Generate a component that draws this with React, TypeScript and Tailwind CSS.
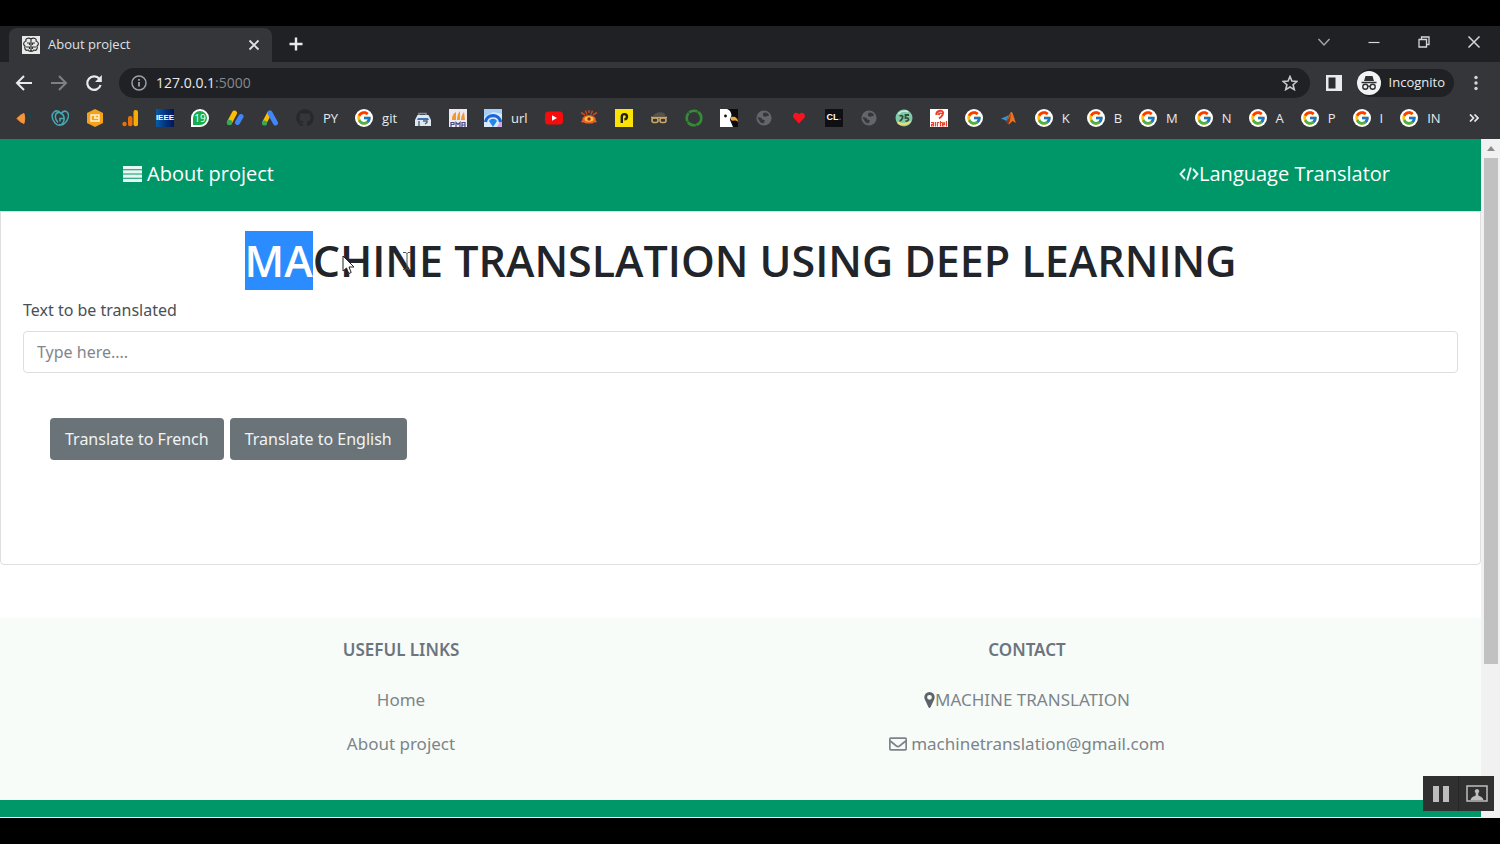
import type { ReactNode } from "react";
import { FaGithub, FaHeart, FaRegEnvelope } from "react-icons/fa";
import { FcGoogle } from "react-icons/fc";

type Bookmark = { name: string; icon: ReactNode; label?: string };

function Google() {
  return (
    <span className="flex h-[18px] w-[18px] items-center justify-center rounded-full bg-white">
      <FcGoogle size={16} />
    </span>
  );
}

function Svg({ children }: { children: ReactNode }) {
  return (
    <svg viewBox="0 0 18 18" className="h-[18px] w-[18px]" fill="none">
      {children}
    </svg>
  );
}

function Globe() {
  return (
    <Svg>
      <circle cx="9" cy="9" r="7.6" fill="#626569" />
      <path d="M8 4.500c2-2 5-.5 6 1.500-1 2-3 .5-3.500 2L8 7zM2.500 8.500c2.500-.5 4 .5 5 2l2.500 1-1.500 3-3-1z" fill="#36373a" />
    </Svg>
  );
}

const bookmarks: Bookmark[] = [
  {
    name: "Arrows",
    icon: (
      <Svg>
        <path d="M1 9.500 4 6.500 8 4.500q1.500 4.500 0 10l-4-2z" fill="#f7953c" stroke="#f7953c" strokeLinejoin="round" />
        <path d="M12.500 3v7.500l5-4z" fill="#12474d" />
      </Svg>
    ),
  },
  {
    name: "GoDaddy",
    icon: (
      <Svg>
        <path
          d="M7 13.500C3 9.500 3.500 3 8.500 3.600c4 .8 6.500 6 3 10.900-2 2.500-5 2.300-7.500-.5-3-3.500-4-8.500-1-11C5.500 1 8 2 10 4.500c1.500-2 4-3 6-1.500 3 2.500 1 8-2 11-2 2-4 2.500-6 1.500M12.500 9.500H9v3"
          stroke="#43a9b5"
          strokeWidth="1.500"
        />
      </Svg>
    ),
  },
  {
    name: "Hexagon",
    icon: (
      <Svg>
        <path d="m9 0 8 4v10l-8 4-8-4V4z" fill="#f5a21b" />
        <path d="M5 6h8v6H5zM8 9h5M9 6v3" stroke="#fff3d6" strokeWidth="1.400" />
      </Svg>
    ),
  },
  {
    name: "Analytics",
    icon: (
      <Svg>
        <circle cx="3.500" cy="15" r="2.200" fill="#e8710a" />
        <rect x="7" y="7" width="4.500" height="10.200" rx="2" fill="#e8710a" />
        <rect x="12.500" y="1" width="4.500" height="16.200" rx="2" fill="#f9ab00" />
      </Svg>
    ),
  },
  {
    name: "IEEE Xplore",
    icon: (
      <span className="flex h-[18px] w-[18px] items-center justify-center bg-linear-to-r from-[#0b5aa8] to-[#03145c] font-['Liberation_Sans'] text-[8px] font-bold text-white">
        IEEE
      </span>
    ),
  },
  {
    name: "WhatsApp",
    icon: (
      <span className="flex h-[18px] w-[18px] items-center justify-center rounded-full rounded-bl-sm border-2 border-white bg-[#16ad4b] text-[10px] text-white">
        19
      </span>
    ),
  },
  {
    name: "AdSense",
    icon: (
      <Svg>
        <path d="M3.500 13.500 8.500 4" stroke="#fbbc04" strokeWidth="5" strokeLinecap="round" />
        <circle cx="3.500" cy="13.500" r="2.700" fill="#34a853" />
        <path d="m11.500 13.500 3.500-6" stroke="#4285f4" strokeWidth="5" strokeLinecap="round" />
      </Svg>
    ),
  },
  {
    name: "Ads",
    icon: (
      <Svg>
        <path d="M3.500 13.500 8.500 4" stroke="#fbbc04" strokeWidth="4.500" strokeLinecap="round" />
        <path d="m9 4 5.500 10" stroke="#4285f4" strokeWidth="5" strokeLinecap="round" />
        <circle cx="3.500" cy="14" r="2.600" fill="#34a853" />
      </Svg>
    ),
  },
  { name: "GitHub", icon: <FaGithub size={18} color="#27282b" />, label: "PY" },
  { name: "Google git", icon: <Google />, label: "git" },
  {
    name: "Store",
    icon: (
      <Svg>
        <path d="M5 7V4.500h7V7" stroke="#7f8b9c" strokeWidth="1.600" />
        <path d="M3.500 6h11L17 11v6H1v-6z" fill="#dfe7f2" />
        <path d="M4 9h10l1 2H3z" fill="#3e6fae" />
        <path d="M9 12h4v1.500l-2 1.500M5 12v5" stroke="#536173" strokeWidth="1.400" />
      </Svg>
    ),
  },
  {
    name: "phpMyAdmin",
    icon: (
      <Svg>
        <rect width="18" height="18" fill="#eeeaf0" />
        <path d="M3 11c0-5 2-7 4-8v8zM8 11c0-4 1-7 3-9v9zM12 11c0-3 1-6 3-8l1 8z" fill="#f49a2d" />
        <path d="M2 18v-4.500h3v2H2M7 18v-4.500l2 2 2-2V18M13 18v-4.500h3V18M13 16h3" stroke="#4d4c87" strokeWidth="1.200" />
      </Svg>
    ),
  },
  {
    name: "Shortener",
    icon: (
      <Svg>
        <rect width="18" height="18" fill="#dce9fb" />
        <path d="M0 8V0h18v5L9 3z" fill="#a6cff7" />
        <path d="M18 9v9h-5z" fill="#c9a7e8" />
        <path d="M1.500 13c1-8.500 14-8.500 15 0" stroke="#1667d9" strokeWidth="3.200" />
        <path d="M5 12c2-3 6-3 8 0l-4 6z" fill="#2387ee" />
      </Svg>
    ),
    label: "url",
  },
  {
    name: "YouTube",
    icon: (
      <Svg>
        <rect y="2.500" width="18" height="13" rx="3.500" fill="#f80b0b" />
        <path d="m7 6.200 5 2.800-5 2.800z" fill="#fff" />
      </Svg>
    ),
  },
  {
    name: "Eye",
    icon: (
      <Svg>
        <path d="M1 3.500 5 6M5.500 1.500l1.500 4M9 1v3M12.500 1.500l-1.500 4M17 3.500 13 6" stroke="#c34a22" strokeWidth="1.500" />
        <path d="M.5 13q2-.5 2-4c3-4 10-4 13 0q0 3.500 2 4-4 0-5 1.500H6Q4 13 .5 13" fill="#e8602a" />
        <ellipse cx="9" cy="10" rx="4.500" ry="2.800" fill="#ffc038" />
        <circle cx="9" cy="10" r="1.700" fill="#8c2410" />
      </Svg>
    ),
  },
  {
    name: "Yellow P",
    icon: (
      <Svg>
        <rect width="18" height="18" fill="#fbe305" />
        <path d="M6.800 14V7.500a2.600 2.600 0 1 1 2.600 2.800" stroke="#24230f" strokeWidth="2.400" />
      </Svg>
    ),
  },
  {
    name: "Glasses",
    icon: (
      <Svg>
        <path d="M3 7c2-4 9-5 12-2v2z" fill="#59524a" />
        <path d="M1 8.500h16" stroke="#c9a86a" strokeWidth="1.600" />
        <rect x="2" y="9" width="6" height="4.500" rx="2" stroke="#c9a86a" strokeWidth="1.600" />
        <rect x="10" y="9" width="6" height="4.500" rx="2" stroke="#c9a86a" strokeWidth="1.600" />
      </Svg>
    ),
  },
  {
    name: "Anaconda",
    icon: (
      <Svg>
        <circle cx="9" cy="9" r="7.300" stroke="#348d36" strokeWidth="2.600" strokeDasharray="9 .6" />
      </Svg>
    ),
  },
  {
    name: "Eagle",
    icon: (
      <Svg>
        <rect width="18" height="18" fill="#0c0c0c" />
        <path d="M0 0h7c3 1 4 3 4.500 6L10 11l3 7H0z" fill="#fff" />
        <path d="M11 8c4-1 7 1 7 5-3-3-5 0-7-2z" fill="#efa63c" />
        <circle cx="5.500" cy="7" r="1.400" fill="#111" />
      </Svg>
    ),
  },
  { name: "Site one", icon: <Globe /> },
  {
    name: "Favourites",
    icon: (
      <span className="flex h-[18px] w-[18px] items-center justify-center">
        <FaHeart size={12} color="#f5141f" />
      </span>
    ),
  },
  {
    name: "CL",
    icon: (
      <span className="flex h-[18px] w-[18px] items-center justify-center bg-[#0f1013] font-['Liberation_Sans'] text-[9px] font-bold text-white">
        CL<span className="text-[#e11d48]">.</span>
      </span>
    ),
  },
  { name: "Site two", icon: <Globe /> },
  {
    name: "Badge",
    icon: (
      <Svg>
        <circle cx="9" cy="9" r="8.500" fill="#7fc9a8" />
        <path d="M3 13c2 3 10 3 12-1" stroke="#e8dc7a" strokeWidth="2.400" />
        <path d="M4.500 7c2-1 4 0 3 2s-2 3-3 3M14 6h-3.500v3c4-.5 4 3.500 0 3" stroke="#35513a" strokeWidth="1.800" />
        <path d="M3.500 5C6 1.500 11 1.500 13 3" stroke="#d7f0e0" strokeWidth="1.500" />
      </Svg>
    ),
  },
  {
    name: "Airtel",
    icon: (
      <Svg>
        <rect width="18" height="18" fill="#fff" />
        <path d="M6.500 6c-1-4 6-6 6.500-2.500.3 2-2 4.500-4 6M8.500 6C9 4.500 11 4 11 5" stroke="#e8402c" strokeWidth="2" />
        <path
          d="M1 13.500h2.500V17H1.500v-1.700h2M5.500 13v4.500M7.500 17.500v-4H9M10.500 12v5.500M9.800 13.500H12M14.500 17h-2v-3.200h2v1.500h-2M16.500 12v5.500"
          stroke="#e8402c"
          strokeWidth="1.200"
        />
      </Svg>
    ),
  },
  { name: "Google", icon: <Google /> },
  {
    name: "MATLAB",
    icon: (
      <Svg>
        <path d="m1 9.500 5-2 3-1.500-2.500 6z" fill="#3d8fc7" />
        <path d="m6.500 13 2-5c1-2 1.500-5 3-5s3 8 4.500 11l-3.500-2-3.500 3.500z" fill="#e8741e" />
        <path d="M5.500 12.500c3-1 4.500-6 5.500-9l-1 8-1.500 3.500z" fill="#8f3216" />
      </Svg>
    ),
  },
  { name: "Google K", icon: <Google />, label: "K" },
  { name: "Google B", icon: <Google />, label: "B" },
  { name: "Google M", icon: <Google />, label: "M" },
  { name: "Google N", icon: <Google />, label: "N" },
  { name: "Google A", icon: <Google />, label: "A" },
  { name: "Google P", icon: <Google />, label: "P" },
  { name: "Google I", icon: <Google />, label: "I" },
  { name: "Google IN", icon: <Google />, label: "IN" },
];

function TabStrip() {
  return (
    <div className="flex h-9 items-end bg-[#202124] pl-[9px]">
      <div className="flex h-[34px] w-[263px] items-center rounded-t-lg bg-[#35363a] pr-3 pl-[13px] text-[#dfe1e5]">
        <svg viewBox="0 0 18 18" className="h-[18px] w-[18px]" fill="none">
          <rect width="18" height="18" fill="#e9e9e9" />
          <path
            d="M9 2v14M9 3C6 1 3 3 4 5c-3 1-3 4-1 5-1 3 1 5 3 4 1 2 3 1 3 0M9 3c3-2 6 0 5 2 3 1 3 4 1 5 1 3-1 5-3 4-1 2-3 1-3 0M5 7h2.500v2M4 11h3.500v2M13 7h-2.500v2M14 11h-3.500v2"
            stroke="#333"
            strokeWidth="1.200"
          />
        </svg>
        <span className="ml-2 flex-1 text-[13px]">About project</span>
        <button aria-label="Close tab">
          <svg viewBox="0 0 12 12" className="h-3 w-3" stroke="currentColor" strokeWidth="1.900">
            <path d="m1.500 1.500 9 9M10.500 1.500l-9 9" />
          </svg>
        </button>
      </div>
      <button aria-label="New tab" className="ml-[17px] flex h-9 items-center text-[#e8eaed]">
        <svg viewBox="0 0 14 14" className="h-[14px] w-[14px]" stroke="currentColor" strokeWidth="2.400">
          <path d="M7 .5v13M.5 7h13" />
        </svg>
      </button>
      <div className="mr-[19px] ml-auto flex h-[31px] items-center gap-9 self-start text-[#d5d7da]">
        <button aria-label="Search tabs">
          <svg viewBox="0 0 14 14" className="h-[14px] w-[14px]" fill="none" stroke="#a2a4a8" strokeWidth="1.500">
            <path d="m1.500 4 5.500 6 5.500-6" />
          </svg>
        </button>
        <button aria-label="Minimize">
          <svg viewBox="0 0 14 14" className="h-[14px] w-[14px]" stroke="currentColor" strokeWidth="1.200">
            <path d="M1.500 7.500h11" />
          </svg>
        </button>
        <button aria-label="Restore">
          <svg viewBox="0 0 14 14" className="h-[14px] w-[14px]" fill="none" stroke="currentColor" strokeWidth="1.300">
            <path d="M2 4.500h7.500V12H2zM4.500 4.500V2H12v7.500H9.500" />
          </svg>
        </button>
        <button aria-label="Close window">
          <svg viewBox="0 0 14 14" className="h-[14px] w-[14px]" stroke="currentColor" strokeWidth="1.500">
            <path d="m1.500 1.500 11 11M12.500 1.500l-11 11" />
          </svg>
        </button>
      </div>
    </div>
  );
}

function Toolbar() {
  return (
    <div className="flex h-[42px] items-center bg-[#35363a] pr-[22px] pl-[15px]">
      <div className="flex gap-[17px] text-[#e8eaed]">
        <button aria-label="Back">
          <svg viewBox="0 0 18 18" className="h-[18px] w-[18px]" fill="none" stroke="currentColor" strokeWidth="2">
            <path d="M17 9H2.500M9 2 2 9l7 7" />
          </svg>
        </button>
        <button aria-label="Forward">
          <svg viewBox="0 0 18 18" className="h-[18px] w-[18px]" fill="none" stroke="#7e8084" strokeWidth="2">
            <path d="M1 9h14.500M9 2l7 7-7 7" />
          </svg>
        </button>
        <button aria-label="Reload">
          <svg viewBox="0 0 18 18" className="h-[18px] w-[18px]" fill="none" stroke="currentColor" strokeWidth="2.200">
            <path d="M14.500 5A6.800 6.800 0 1 0 15.600 11" />
            <path d="M16.800 1v7H10z" fill="currentColor" stroke="none" />
          </svg>
        </button>
      </div>
      <div className="ml-4 flex h-[30px] flex-1 items-center rounded-full bg-[#202124] pr-3 pl-3">
        <svg viewBox="0 0 16 16" className="h-4 w-4" fill="none" stroke="#9aa0a6" strokeWidth="1.500">
          <circle cx="8" cy="8" r="7" />
          <path d="M8 7v4.500M8 4v1.700" strokeWidth="1.800" />
        </svg>
        <div className="ml-[9px] flex-1 text-sm text-[#e8eaed]">
          127.0.0.1<span className="text-[#85888c]">:5000</span>
        </div>
        <button aria-label="Bookmark this tab">
          <svg viewBox="0 0 16 16" className="h-4 w-4" fill="none" stroke="#c7cacd" strokeWidth="1.600">
            <path d="m8 1.500 1.900 4.600 5 .4-3.800 3.200 1.200 4.900L8 12l-4.300 2.600 1.200-4.900L1.100 6.500l5-.4z" />
          </svg>
        </button>
      </div>
      <button aria-label="Side panel" className="ml-4">
        <svg viewBox="0 0 16 16" className="h-4 w-4">
          <path d="M0 0h16v16H0z" fill="#e8eaed" />
          <path d="M2.500 2.500h7v11h-7z" fill="#2b2c2f" />
        </svg>
      </button>
      <button className="ml-[15px] flex h-7 items-center rounded-full bg-[#202124] pr-[9px] text-[#e8eaed]">
        <svg viewBox="0 0 24 24" className="h-6 w-6">
          <circle cx="12" cy="12" r="12" fill="#f1f3f4" />
          <path d="M8.500 5h7l1.500 5H7z" fill="#303134" />
          <path d="M4.500 11.500h15" stroke="#303134" strokeWidth="1.500" />
          <g fill="none" stroke="#303134" strokeWidth="1.400">
            <circle cx="8.300" cy="15.800" r="2.500" />
            <circle cx="15.700" cy="15.800" r="2.500" />
            <path d="M10.800 15.500q1.200-.8 2.400 0" />
          </g>
        </svg>
        <span className="ml-2 text-[13px]">Incognito</span>
      </button>
      <button aria-label="Menu" className="ml-5">
        <svg viewBox="0 0 4 16" className="h-4 w-1" fill="#d5d7da">
          <circle cx="2" cy="2.500" r="1.700" />
          <circle cx="2" cy="8" r="1.700" />
          <circle cx="2" cy="13.500" r="1.700" />
        </svg>
      </button>
    </div>
  );
}

function Bookmarks() {
  return (
    <div className="flex h-[35px] items-center justify-between bg-[#35363a] pr-[21px] pb-[7px] pl-4 text-[#e8eaed]">
      <div className="flex items-center gap-[17px]">
        {bookmarks.map((b) => (
          <a key={b.name} href="#" aria-label={b.name} className="flex shrink-0 items-center gap-[9px]">
            {b.icon}
            {b.label && <span className="text-[13px] leading-4">{b.label}</span>}
          </a>
        ))}
      </div>
      <button aria-label="More bookmarks">
        <svg viewBox="0 0 10 8" className="h-2 w-[10px]" fill="none" stroke="currentColor" strokeWidth="1.700">
          <path d="m1 .5 3.500 3.500L1 7.500M5.500.5 9 4 5.500 7.500" />
        </svg>
      </button>
    </div>
  );
}

function Cursors() {
  return (
    <>
      <svg viewBox="0 0 14 20" className="absolute top-[116px] left-[342px] h-5 w-[14px]">
        <path d="M1 1v15l3.500-3 2.300 5.500 2.400-1L7 12h5z" fill="#fff" stroke="#222" />
      </svg>
      <svg viewBox="0 0 8 18" className="absolute top-[113px] left-[403px] h-[18px] w-2" fill="none" stroke="#555">
        <path d="M0 .5h3l1 1 1-1h3M4 1v16M0 17.500h3l1-1 1 1h3" />
      </svg>
    </>
  );
}

function Page() {
  return (
    <div className="relative min-w-0 flex-1 bg-white font-['Noto_Sans',sans-serif]">
      <nav className="flex h-[72px] items-center justify-between bg-[#009768] pr-[91px] pb-[2px] pl-[123px] font-['Open_Sans',sans-serif] text-xl text-white">
        <a href="#about" className="flex items-center gap-[5px]">
          <svg viewBox="0 0 19 16" className="h-4 w-[19px]" fill="#e9f7f2">
            <path d="M0 0h19v3.200H0zM0 4.200h19v3.200H0zM0 8.500h19v3.200H0zM0 12.800h19V16H0z" />
          </svg>
          About project
        </a>
        <a href="#home" className="flex items-center">
          <svg viewBox="0 0 20 16" className="h-4 w-5" fill="none" stroke="#e9f7f2" strokeWidth="1.900">
            <path d="M6 3 1.500 8 6 13M14 3l4.500 5-4.500 5M11.800 1.500l-3.600 13" />
          </svg>
          Language Translator
        </a>
      </nav>

      <main className="h-[354px] rounded-b border border-[#dfdfdf] px-[22px] pt-5">
        <h1 className="text-center font-['Open_Sans',sans-serif] text-[43px] leading-[58px] font-semibold whitespace-nowrap text-[#212529]">
          <span className="bg-[#2b8cff] text-white">MA</span>CHINE TRANSLATION USING DEEP LEARNING
        </h1>
        <label htmlFor="source" className="mt-2 block text-base leading-6 text-[#495057]">
          Text to be translated
        </label>
        <input
          id="source"
          type="text"
          placeholder="Type here...."
          className="mt-[9px] block h-[42px] w-full rounded border border-[#dcdfe2] px-[13px] text-base text-[#495057] placeholder:text-[#7f868c]"
        />
        <div className="mt-[45px] flex gap-[6px] pl-[27px] text-base text-[#f1f3f4]">
          <button className="h-[42px] rounded bg-[#6a7377] px-[15px]">Translate to French</button>
          <button className="h-[42px] rounded bg-[#6a7377] px-[15px]">Translate to English</button>
        </div>
      </main>

      <footer className="mt-[53px] border-b-[17px] border-[#009768] bg-[#f7fcf9] text-[17px] text-[#7d848a]">
        <div className="grid h-[182px] grid-cols-2 pt-5 pr-[141px] pl-[88px] text-center leading-6">
          <div>
            <h6 className="font-semibold text-[#6c757d]">USEFUL LINKS</h6>
            <p className="mt-[26px]"><a href="#home">Home</a></p>
            <p className="mt-5"><a href="#about">About project</a></p>
          </div>
          <div>
            <h6 className="font-semibold text-[#6c757d]">CONTACT</h6>
            <p className="mt-[26px] flex items-center justify-center">
              <svg viewBox="0 0 11 16" className="h-4 w-[11px]" fill="#5c646b">
                <path
                  fillRule="evenodd"
                  d="M5.500 0a5.200 5.200 0 0 1 5.200 5.200c0 1.200-.4 2-.8 2.800L6.500 15.300c-.4.8-1.600.8-2 0L1.100 8C.7 7.200.3 6.400.3 5.200A5.200 5.200 0 0 1 5.500 0m0 2.900a2.400 2.400 0 1 0 0 4.800 2.400 2.400 0 0 0 0-4.800"
                />
              </svg>
              MACHINE TRANSLATION
            </p>
            <p className="mt-5 flex items-center justify-center gap-1">
              <FaRegEnvelope size={18} />
              machinetranslation@gmail.com
            </p>
          </div>
        </div>
      </footer>
      <Cursors />
    </div>
  );
}

export default function App() {
  return (
    <div className="flex min-h-screen flex-col bg-black py-[26px] font-['Open_Sans',sans-serif]">
      <TabStrip />
      <Toolbar />
      <Bookmarks />
      <div className="relative flex flex-1">
        <Page />
        {/* Scrollbar */}
        <div className="flex w-[19px] flex-col items-center bg-[#f1f1f1]">
          <svg viewBox="0 0 8 5" className="my-[7px] h-[5px] w-2 shrink-0" fill="#8b8b8b">
            <path d="M4 0 8 5H0z" />
          </svg>
          <div className="h-[506px] w-[14px] bg-[#c1c1c1]" />
        </div>
        {/* Recorder controls */}
        <div className="absolute right-[6px] bottom-[7px] flex h-[35px] w-[71px] bg-[#303030] text-[#bdbdbd]">
          <button aria-label="Pause" className="flex flex-1 items-center justify-center border-r border-[#262626]">
            <svg viewBox="0 0 16 16" className="h-4 w-4" fill="currentColor">
              <path d="M0 0h6v16H0zM10 0h6v16h-6z" />
            </svg>
          </button>
          <button aria-label="Webcam" className="flex flex-1 items-center justify-center">
            <svg viewBox="0 0 22 17" className="h-[17px] w-[22px]" fill="currentColor">
              <path d="M1 1h20v15H1z" fill="none" stroke="currentColor" strokeWidth="1.500" />
              <path d="M11 4a2.200 2.200 0 0 1 1.300 4v2.500c2 .8 4.700 1.700 5.200 4.500h-13c.5-2.800 3.200-3.700 5.200-4.500V8A2.200 2.200 0 0 1 11 4" />
            </svg>
          </button>
        </div>
      </div>
    </div>
  );
}
